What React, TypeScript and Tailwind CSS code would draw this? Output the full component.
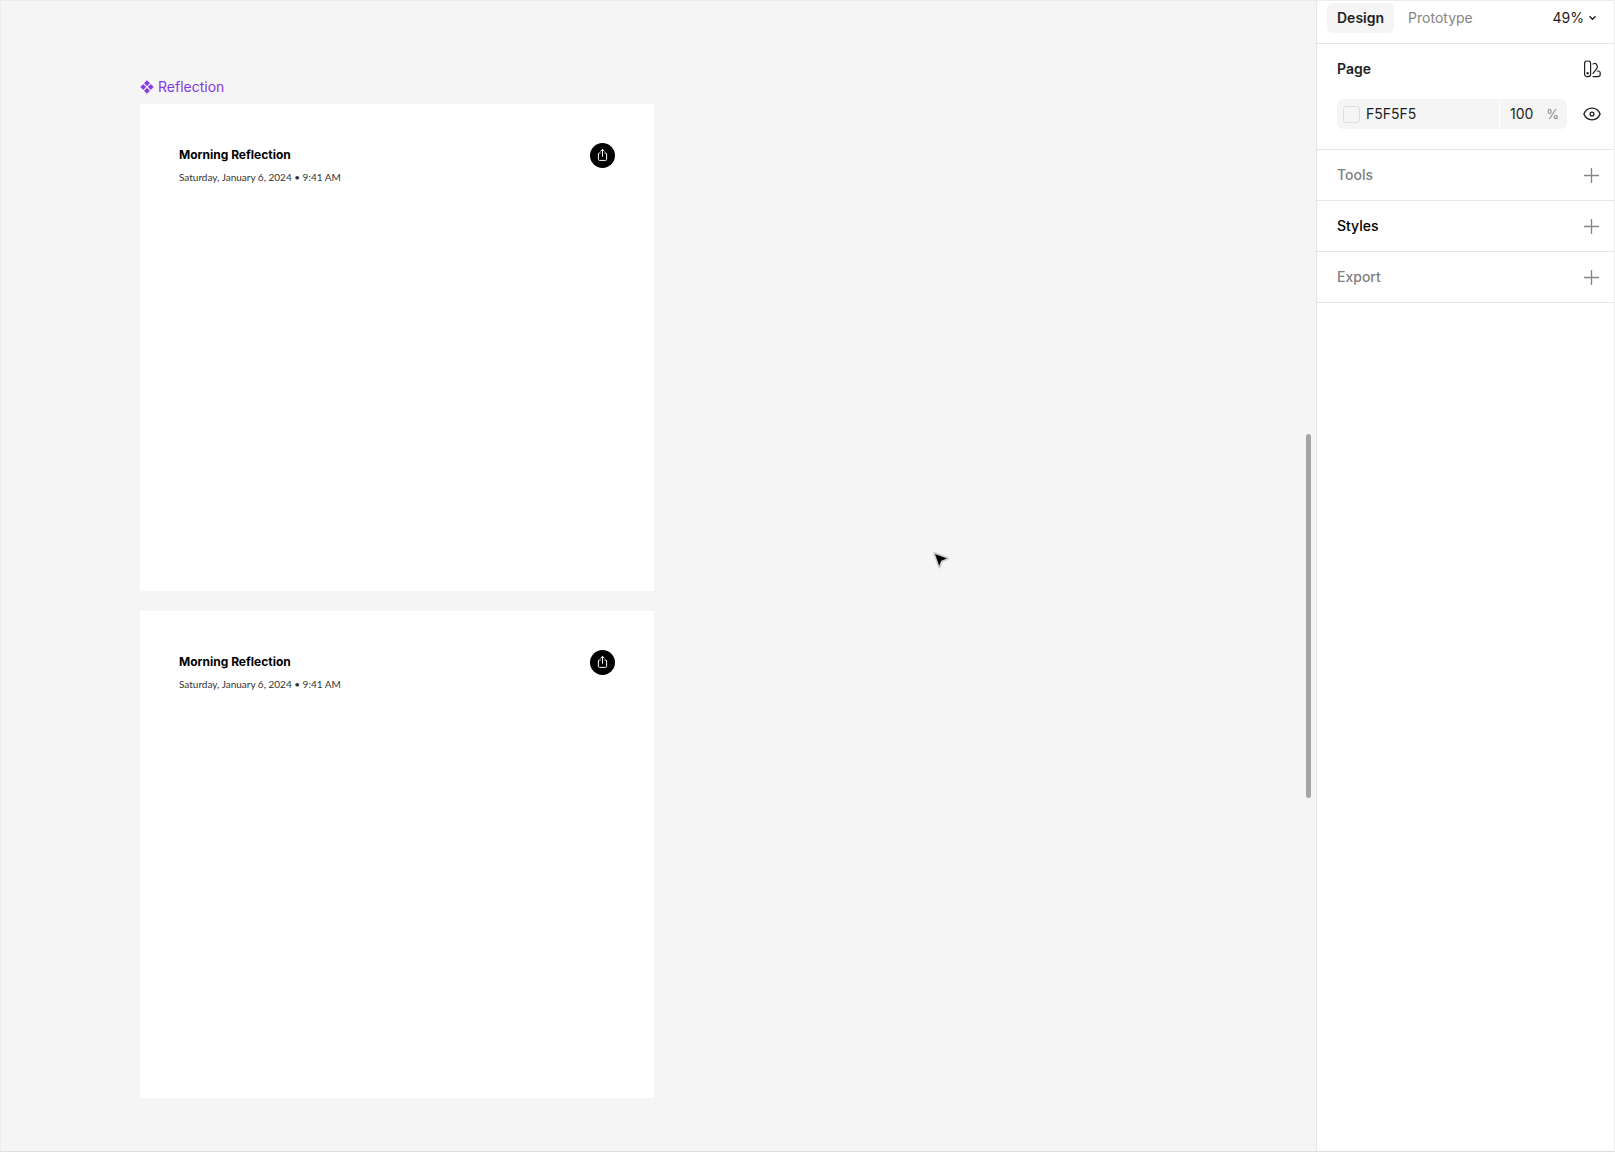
import { useState } from "react"

const frames = [
  { id: "default", title: "Morning Reflection", date: "Saturday, January 6, 2024 • 9:41 AM" },
  { id: "variant", title: "Morning Reflection", date: "Saturday, January 6, 2024 • 9:41 AM" },
]

const sections = [
  { name: "Tools", tone: "text-[#808080]" },
  { name: "Styles", tone: "text-black" },
  { name: "Export", tone: "text-[#808080]" },
]

function ComponentIcon() {
  return (
    <svg width="14" height="14" viewBox="0 0 14 14" fill="currentColor" stroke="currentColor" strokeWidth=".6" strokeLinejoin="round" aria-hidden="true">
      <path d="M7 .6 9.6 3.2 7 5.8 4.4 3.2zM7 8.2l2.6 2.6L7 13.4l-2.6-2.6zM3.2 4.4 5.8 7 3.2 9.6.6 7zM10.8 4.4 13.4 7l-2.6 2.6L8.2 7z" />
    </svg>
  )
}

function ShareIcon() {
  return (
    <svg width="11" height="15" viewBox="0 0 11 15" fill="none" stroke="currentColor" strokeWidth="1" aria-hidden="true">
      <path d="M3.6 5H2.4a1 1 0 0 0-1 1v5.4a1 1 0 0 0 1 1h6.2a1 1 0 0 0 1-1V6a1 1 0 0 0-1-1H7.4" />
      <path d="M5.5 8.8V1.5M3.4 3.4l2.1-2.1 2.1 2.1" />
    </svg>
  )
}

function LibraryIcon() {
  return (
    <svg width="18" height="18" viewBox="0 0 18 18" fill="none" stroke="currentColor" strokeWidth="1.2" strokeLinecap="round" strokeLinejoin="round" aria-hidden="true">
      <rect x="1.6" y="1" width="6" height="15.6" rx="2.4" />
      <circle cx="4.6" cy="13.3" r=".6" fill="currentColor" />
      <path d="M10 4l1.4-.5c.8-.2 1.5.1 1.9.8l.9 1.6c.4.8.3 1.6-.2 2.3L10 13.4" />
      <path d="M10 16.6h5c1.3 0 2.2-.9 2.2-2.1V13c0-1.2-.9-2-2.1-2h-1" />
    </svg>
  )
}

function EyeIcon() {
  return (
    <svg width="18" height="14" viewBox="0 0 18 14" fill="none" stroke="currentColor" strokeWidth="1.3" aria-hidden="true">
      <path d="M.9 7C2.4 3.2 5.4 1.2 9 1.2S15.6 3.2 17.1 7C15.6 10.8 12.6 12.8 9 12.8S2.4 10.8.9 7z" />
      <circle cx="9" cy="7" r="1.9" />
    </svg>
  )
}

function PlusIcon() {
  return (
    <svg width="15" height="15" viewBox="0 0 15 15" stroke="currentColor" strokeWidth="1.3" aria-hidden="true">
      <path d="M7.5 0v15M0 7.5h15" />
    </svg>
  )
}

function Frame({ title, date }: { title: string; date: string }) {
  return (
    <article className="flex min-h-[487px] items-start justify-between bg-white p-[39px]">
      <div>
        <h2 className="text-xs leading-6 font-bold text-black">{title}</h2>
        <p className="font-[Lato,sans-serif] text-[10px] leading-5 text-[#333]">{date}</p>
      </div>
      <button
        type="button"
        aria-label="Share"
        className="flex size-[25px] items-center justify-center rounded-full bg-black text-white"
      >
        <ShareIcon />
      </button>
    </article>
  )
}

function Canvas() {
  return (
    <main className="relative flex-1 bg-[#f5f5f5] pt-[75px] pl-[139px]">
      <div className="flex h-7 items-start text-[#8638e5]">
        <div className="flex items-center gap-1">
          <ComponentIcon />
          <span className="text-sm leading-[22px]">Reflection</span>
        </div>
      </div>
      <div className="flex w-[514px] max-w-full flex-col gap-5">
        {frames.map((frame) => (
          <Frame key={frame.id} title={frame.title} date={frame.date} />
        ))}
      </div>
      <svg
        className="absolute top-[549px] left-[931px]"
        width="20"
        height="20"
        viewBox="0 0 20 20"
        aria-hidden="true"
      >
        <path d="M2.5 3.5 15.5 8.5 9.5 11 7.5 17z" fill="#000" stroke="#d0d0d0" strokeWidth="3" strokeLinejoin="round" />
        <path d="M3 4 15 8.5 9.2 10.7 7.2 16z" fill="#000" />
      </svg>
      <div className="absolute top-[433px] right-[5px] h-[364px] w-[5px] rounded-full bg-[#a5a5a5]" />
    </main>
  )
}

function Inspector() {
  const [tab, setTab] = useState("Design")
  const [color, setColor] = useState("F5F5F5")
  const [opacity, setOpacity] = useState("100")

  return (
    <aside className="w-[298px] shrink-0 border-l border-[#e6e6e6] bg-white text-sm text-[#1e1e1e]">
      <header className="flex items-center border-b border-[#e6e6e6] pt-[2px] pr-[17px] pb-[10px] pl-[10px]">
        <div className="flex gap-1">
          {["Design", "Prototype"].map((name) => (
            <button
              key={name}
              type="button"
              onClick={() => setTab(name)}
              className={
                tab === name
                  ? "h-[30px] rounded-md bg-[#f5f5f5] px-[10px] font-semibold"
                  : "h-[30px] rounded-md px-[10px] text-[#868686]"
              }
            >
              {name}
            </button>
          ))}
        </div>
        <button type="button" className="ml-auto flex h-[30px] items-center gap-1">
          49%
          <svg width="9" height="6" viewBox="0 0 9 6" fill="none" stroke="currentColor" strokeWidth="1.4" aria-hidden="true">
            <path d="M1.5 1.2l3 3 3-3" />
          </svg>
        </button>
      </header>

      <section className="flex flex-col gap-[15px] border-b border-[#e6e6e6] pt-[10px] pr-[13px] pb-5 pl-5">
        <div className="flex h-[30px] items-center justify-between">
          <h2 className="font-semibold">Page</h2>
          <button type="button" aria-label="Libraries">
            <LibraryIcon />
          </button>
        </div>
        <div className="flex h-[30px] items-center justify-between">
          <div className="flex h-full w-[230px] overflow-hidden rounded-md bg-[#f5f5f5]">
            <label className="flex flex-1 items-center gap-1.5 border-r border-white pl-1.5">
              <span className="size-[17px] shrink-0 rounded-[3px] border border-[#dedede] bg-[#f5f5f5]" />
              <input
                aria-label="Page color"
                value={color}
                onChange={(e) => setColor(e.target.value)}
                className="w-full min-w-0 bg-transparent outline-none"
              />
            </label>
            <label className="flex w-[67px] items-center justify-between pr-2 pl-[10px]">
              <input
                aria-label="Opacity"
                value={opacity}
                onChange={(e) => setOpacity(e.target.value)}
                className="w-8 bg-transparent outline-none"
              />
              <span className="text-[13px] text-[#868686]">%</span>
            </label>
          </div>
          <button type="button" aria-label="Toggle visibility">
            <EyeIcon />
          </button>
        </div>
      </section>

      {sections.map(({ name, tone }) => (
        <section
          key={name}
          className="flex h-[51px] items-center justify-between border-b border-[#e6e6e6] pr-[15px] pl-5"
        >
          <h2 className={`font-medium ${tone}`}>{name}</h2>
          <button type="button" aria-label={`Add ${name}`} className="text-[#868686]">
            <PlusIcon />
          </button>
        </section>
      ))}
    </aside>
  )
}

export default function App() {
  return (
    <div className="flex min-h-screen border border-[#ececec] border-b-[#dedede] font-[Inter,sans-serif]">
      <Canvas />
      <Inspector />
    </div>
  )
}
